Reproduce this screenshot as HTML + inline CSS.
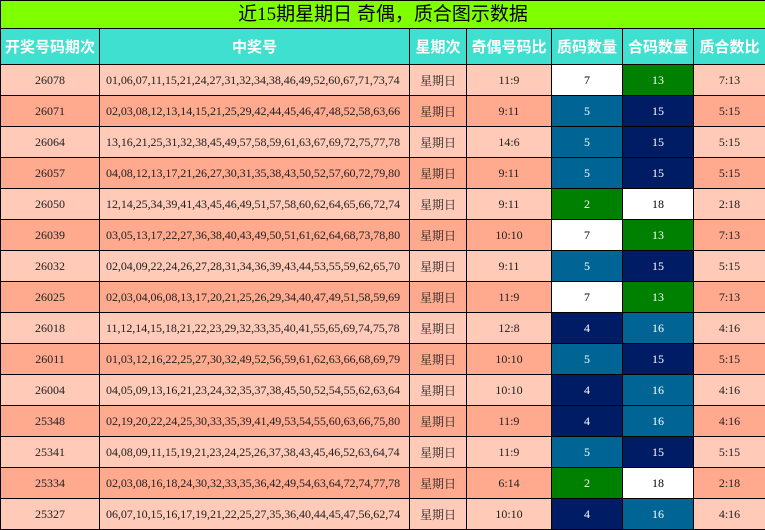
<!DOCTYPE html>
<html><head><meta charset="utf-8"><style>
body{margin:0;width:765px;height:530px;overflow:hidden;background:#fff;font-family:"Liberation Serif","Noto Serif CJK SC",serif;}
table{border-collapse:collapse;table-layout:fixed;width:765px;}
td{border:1px solid #000;text-align:center;padding:0;font-size:12px;color:#222;}
.t td{background:#7FFF00;height:27px;font-size:19px;font-family:"Liberation Serif","Noto Sans CJK SC",sans-serif;color:#000;line-height:26px;}
.h td{background:#40E0D0;height:35px;color:#fff;font-weight:bold;font-size:15px;font-family:"Liberation Sans","Noto Sans CJK SC",sans-serif;}
tr.r td{height:30px;}
.a td{background:#FFCBB8}.b td{background:#FFA98E}
tr td.n{text-align:left;padding-left:6px;font-size:12px;letter-spacing:-0.05px}
td.w{background:#fff!important;color:#000}
td.g{background:#008000!important;color:#fff}
td.d{background:#001C64!important;color:#fff}
td.u{background:#006495!important;color:#fff}
</style></head><body>
<table>
<colgroup><col style="width:99px"><col style="width:310px"><col style="width:57px"><col style="width:85px"><col style="width:71px"><col style="width:71px"><col style="width:72px"></colgroup>
<tr class="t"><td colspan="7">近15期星期日 奇偶，质合图示数据</td></tr>
<tr class="h"><td>开奖号码期次</td><td>中奖号</td><td>星期次</td><td>奇偶号码比</td><td>质码数量</td><td>合码数量</td><td>质合数比</td></tr>
<tr class="r a"><td>26078</td><td class="n">01,06,07,11,15,21,24,27,31,32,34,38,46,49,52,60,67,71,73,74</td><td>星期日</td><td>11:9</td><td class="w">7</td><td class="g">13</td><td>7:13</td></tr>
<tr class="r b"><td>26071</td><td class="n">02,03,08,12,13,14,15,21,25,29,42,44,45,46,47,48,52,58,63,66</td><td>星期日</td><td>9:11</td><td class="u">5</td><td class="d">15</td><td>5:15</td></tr>
<tr class="r a"><td>26064</td><td class="n">13,16,21,25,31,32,38,45,49,57,58,59,61,63,67,69,72,75,77,78</td><td>星期日</td><td>14:6</td><td class="u">5</td><td class="d">15</td><td>5:15</td></tr>
<tr class="r b"><td>26057</td><td class="n">04,08,12,13,17,21,26,27,30,31,35,38,43,50,52,57,60,72,79,80</td><td>星期日</td><td>9:11</td><td class="u">5</td><td class="d">15</td><td>5:15</td></tr>
<tr class="r a"><td>26050</td><td class="n">12,14,25,34,39,41,43,45,46,49,51,57,58,60,62,64,65,66,72,74</td><td>星期日</td><td>9:11</td><td class="g">2</td><td class="w">18</td><td>2:18</td></tr>
<tr class="r b"><td>26039</td><td class="n">03,05,13,17,22,27,36,38,40,43,49,50,51,61,62,64,68,73,78,80</td><td>星期日</td><td>10:10</td><td class="w">7</td><td class="g">13</td><td>7:13</td></tr>
<tr class="r a"><td>26032</td><td class="n">02,04,09,22,24,26,27,28,31,34,36,39,43,44,53,55,59,62,65,70</td><td>星期日</td><td>9:11</td><td class="u">5</td><td class="d">15</td><td>5:15</td></tr>
<tr class="r b"><td>26025</td><td class="n">02,03,04,06,08,13,17,20,21,25,26,29,34,40,47,49,51,58,59,69</td><td>星期日</td><td>11:9</td><td class="w">7</td><td class="g">13</td><td>7:13</td></tr>
<tr class="r a"><td>26018</td><td class="n">11,12,14,15,18,21,22,23,29,32,33,35,40,41,55,65,69,74,75,78</td><td>星期日</td><td>12:8</td><td class="d">4</td><td class="u">16</td><td>4:16</td></tr>
<tr class="r b"><td>26011</td><td class="n">01,03,12,16,22,25,27,30,32,49,52,56,59,61,62,63,66,68,69,79</td><td>星期日</td><td>10:10</td><td class="u">5</td><td class="d">15</td><td>5:15</td></tr>
<tr class="r a"><td>26004</td><td class="n">04,05,09,13,16,21,23,24,32,35,37,38,45,50,52,54,55,62,63,64</td><td>星期日</td><td>10:10</td><td class="d">4</td><td class="u">16</td><td>4:16</td></tr>
<tr class="r b"><td>25348</td><td class="n">02,19,20,22,24,25,30,33,35,39,41,49,53,54,55,60,63,66,75,80</td><td>星期日</td><td>11:9</td><td class="d">4</td><td class="u">16</td><td>4:16</td></tr>
<tr class="r a"><td>25341</td><td class="n">04,08,09,11,15,19,21,23,24,25,26,37,38,43,45,46,52,63,64,74</td><td>星期日</td><td>11:9</td><td class="u">5</td><td class="d">15</td><td>5:15</td></tr>
<tr class="r b"><td>25334</td><td class="n">02,03,08,16,18,24,30,32,33,35,36,42,49,54,63,64,72,74,77,78</td><td>星期日</td><td>6:14</td><td class="g">2</td><td class="w">18</td><td>2:18</td></tr>
<tr class="r a"><td>25327</td><td class="n">06,07,10,15,16,17,19,21,22,25,27,35,36,40,44,45,47,56,62,74</td><td>星期日</td><td>10:10</td><td class="d">4</td><td class="u">16</td><td>4:16</td></tr>
</table>
</body></html>
